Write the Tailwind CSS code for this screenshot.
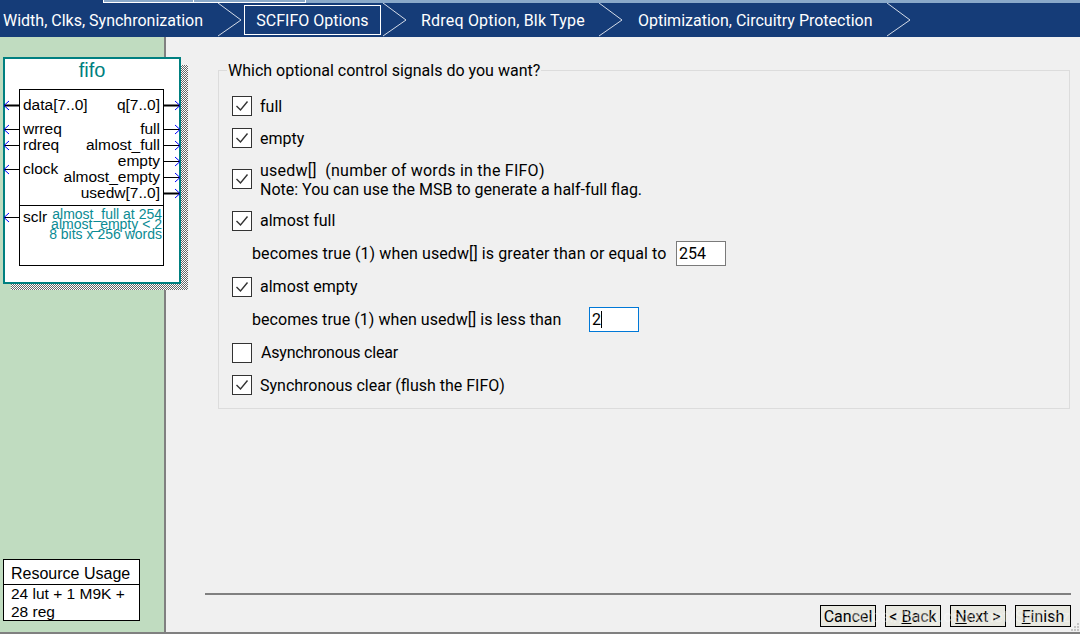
<!DOCTYPE html>
<html lang="en">
<head>
  <meta charset="UTF-8">
  <title>SCFIFO Options</title>
  <script src="https://cdn.jsdelivr.net/npm/@tailwindcss/browser@4"></script>
</head>
<body class="w-[1080px] h-[634px] overflow-hidden bg-[#f0f0f0] font-['Roboto',sans-serif] text-[16px] text-black flex flex-col">

  <!-- wizard steps -->
  <header class="h-[37px] shrink-0 bg-[#153c78] relative text-white">
    <div class="absolute left-[103px] right-0 top-0 h-[3px] bg-[#8aa9c9]"></div>
    <div class="absolute left-[103px] top-0 h-[3px] w-[203px] flex border-b border-x border-white">
      <div class="w-[90px] border-r border-white"></div>
    </div>
    <nav class="flex items-center h-full pt-[3px]">
      <span class="ml-[3px] w-[215px] pt-[1px] whitespace-nowrap">Width, Clks, Synchronization</span>
      <svg class="w-[24px] h-[34px]" viewBox="0 0 24 34" fill="none" stroke="#d5dce8"><path d="M0 0 L23 17 L0 33"/></svg>
      <span class="ml-[2px] w-[137px] h-[30px] pt-[1px] border border-white flex items-center justify-center whitespace-nowrap">SCFIFO Options</span>
      <svg class="ml-[2px] w-[24px] h-[34px]" viewBox="0 0 24 34" fill="none" stroke="#d5dce8"><path d="M0 0 L23 17 L0 33"/></svg>
      <span class="ml-[14px] w-[178px] pt-[1px] tracking-[0.2px] whitespace-nowrap">Rdreq Option, Blk Type</span>
      <svg class="w-[24px] h-[34px]" viewBox="0 0 24 34" fill="none" stroke="#d5dce8"><path d="M0 0 L23 17 L0 33"/></svg>
      <span class="ml-[15px] w-[249px] pt-[1px] whitespace-nowrap">Optimization, Circuitry Protection</span>
      <svg class="w-[24px] h-[34px]" viewBox="0 0 24 34" fill="none" stroke="#d5dce8"><path d="M0 0 L23 17 L0 33"/></svg>
    </nav>
  </header>

  <div class="flex flex-1 min-h-0 border-b-2 border-[#808080]">
    <!-- symbol panel -->
    <aside class="w-[166px] shrink-0 bg-[#c0dcc0] border-r-2 border-[#808080] relative font-['Liberation_Sans',sans-serif] text-[15.5px] leading-[16px]">
      <div class="absolute left-[11px] top-[28px] w-[177px] h-[225px] bg-[repeating-conic-gradient(#666666_0_25%,#ffffff_0_50%)] bg-size-[2px_2px]"></div>
      <div class="absolute left-[3px] top-[20px] w-[178px] h-[227px] bg-white border-2 border-[#008080]">
        <div class="text-center text-[#008080] text-[20px] leading-[22px]">fifo</div>
      </div>
      <div class="absolute left-[19px] top-[52px] w-[145px] h-[177px] border border-black"></div>
      <div class="absolute left-[19px] top-[168px] w-[145px] h-px bg-black"></div>

      <svg class="absolute left-0 top-0 w-[190px] h-[260px]" viewBox="0 0 190 260" fill="none">
        <g stroke="#000">
          <path d="M4 68.5H19" stroke-width="2"/>
          <path d="M4 92.5H19M4 108.5H19M4 132.5H19M4 180.5H19"/>
          <path d="M164 68.5H180" stroke-width="2"/>
          <path d="M164 92.5H180M164 108.5H180M164 124.5H180M164 140.5H180"/>
          <path d="M164 156.5H180" stroke-width="2"/>
        </g>
        <g stroke="#0000ff">
          <path d="M9 64L4 68.5L9 73M9 88L4 92.5L9 97M9 104L4 108.5L9 113M9 128L4 132.5L9 137M9 176L4 180.5L9 185"/>
          <path d="M175 64L180 68.5L175 73M175 88L180 92.5L175 97M175 104L180 108.5L175 113M175 120L180 124.5L175 129M175 136L180 140.5L175 145M175 152L180 156.5L175 161"/>
        </g>
      </svg>

      <span class="absolute left-[23px] top-[60px]">data[7..0]</span>
      <span class="absolute left-[23px] top-[84px]">wrreq</span>
      <span class="absolute left-[23px] top-[100px]">rdreq</span>
      <span class="absolute left-[23px] top-[124px]">clock</span>
      <span class="absolute left-[23px] top-[172px]">sclr</span>

      <span class="absolute right-[4px] top-[60px]">q[7..0]</span>
      <span class="absolute right-[4px] top-[84px]">full</span>
      <span class="absolute right-[4px] top-[100px]">almost_full</span>
      <span class="absolute right-[4px] top-[116px]">empty</span>
      <span class="absolute right-[4px] top-[132px]">almost_empty</span>
      <span class="absolute right-[4px] top-[148px]">usedw[7..0]</span>

      <span class="absolute right-[2px] top-[172px] text-[14px] leading-[10px] text-[#0a8b94] text-right whitespace-nowrap">almost_full at 254<br>almost_empty &lt; 2<br>8 bits x 256 words</span>

      <div class="absolute left-[3px] top-[522px] w-[137px] h-[62px] bg-white border border-black">
        <div class="h-[25px] border-b border-black pl-[7px] pt-[6px] text-[16px]">Resource Usage</div>
        <div class="pl-[7px] leading-[18px]">24 lut + 1 M9K +<br>28 reg</div>
      </div>
    </aside>

    <!-- options -->
    <main class="flex-1 relative">
      <section class="absolute left-[52px] top-[33px] w-[852px] h-[339px] border border-[#dcdcdc]">
        <h2 class="absolute left-[8px] top-[-11px] px-[1px] bg-[#f0f0f0] text-[16px] leading-[22px] font-normal whitespace-nowrap">Which optional control signals do you want?</h2>
        <div class="pt-[19px] pl-[13px]">
          <label class="h-[32px] flex items-center gap-[8px]">
            <svg class="w-[20px] h-[20px] bg-white border border-[#333333]" viewBox="0 0 18 18" fill="none" stroke="#333333" stroke-width="1.4"><path d="M3.5 9L7.5 13L14.5 4.5"/></svg>
            <span class="pt-[1px]">full</span>
          </label>
          <label class="h-[32px] flex items-center gap-[8px]">
            <svg class="w-[20px] h-[20px] bg-white border border-[#333333]" viewBox="0 0 18 18" fill="none" stroke="#333333" stroke-width="1.4"><path d="M3.5 9L7.5 13L14.5 4.5"/></svg>
            <span class="pt-[1px]">empty</span>
          </label>
          <label class="h-[50px] flex items-center gap-[8px]">
            <svg class="w-[20px] h-[20px] bg-white border border-[#333333]" viewBox="0 0 18 18" fill="none" stroke="#333333" stroke-width="1.4"><path d="M3.5 9L7.5 13L14.5 4.5"/></svg>
            <span class="pt-[1px] leading-[19px]"><span class="tracking-[0.25px]">usedw[] &nbsp;(number of words in the FIFO)</span><br>Note: You can use the MSB to generate a half-full flag.</span>
          </label>
          <label class="h-[33px] flex items-center gap-[8px]">
            <svg class="w-[20px] h-[20px] bg-white border border-[#333333]" viewBox="0 0 18 18" fill="none" stroke="#333333" stroke-width="1.4"><path d="M3.5 9L7.5 13L14.5 4.5"/></svg>
            <span class="pt-[1px]">almost full</span>
          </label>
          <div class="h-[33px] flex items-center pl-[20px]">
            <span class="w-[424px] pt-[1px] tracking-[0.1px] whitespace-nowrap">becomes true (1) when usedw[] is greater than or equal to</span>
            <input class="w-[50px] h-[25px] bg-white border border-[#7a7a7a] px-[2px] outline-none" value="254">
          </div>
          <label class="h-[33px] flex items-center gap-[8px]">
            <svg class="w-[20px] h-[20px] bg-white border border-[#333333]" viewBox="0 0 18 18" fill="none" stroke="#333333" stroke-width="1.4"><path d="M3.5 9L7.5 13L14.5 4.5"/></svg>
            <span class="pt-[1px]">almost empty</span>
          </label>
          <div class="h-[33px] flex items-center pl-[20px]">
            <span class="w-[337px] pt-[1px] tracking-[0.05px] whitespace-nowrap">becomes true (1) when usedw[] is less than</span>
            <div class="w-[50px] h-[25px] bg-white border border-[#0078d7] px-[2px] flex items-center">2<span class="w-px h-[17px] bg-black"></span></div>
          </div>
          <label class="h-[33px] flex items-center gap-[9px]">
            <span class="w-[20px] h-[20px] bg-white border border-[#333333]"></span>
            <span class="pt-[1px] tracking-[-0.2px]">Asynchronous clear</span>
          </label>
          <label class="h-[32px] flex items-center gap-[8px]">
            <svg class="w-[20px] h-[20px] bg-white border border-[#333333]" viewBox="0 0 18 18" fill="none" stroke="#333333" stroke-width="1.4"><path d="M3.5 9L7.5 13L14.5 4.5"/></svg>
            <span class="pt-[1px]">Synchronous clear (flush the FIFO)</span>
          </label>
        </div>
      </section>

      <div class="absolute left-[39px] top-[556px] w-[866px] h-[2px] bg-[#808080]"></div>

      <div class="absolute left-[654px] top-[568px] flex gap-[9px] text-[16px] leading-[20px]">
        <button class="w-[56px] h-[22px] pt-[1px] bg-[#e8e8e0] border border-black text-center">Cancel</button>
        <button class="w-[56px] h-[22px] pt-[1px] bg-[#e8e8e0] border border-black text-center">&lt; <u>B</u>ack</button>
        <button class="w-[56px] h-[22px] pt-[1px] bg-[#e8e8e0] border border-black text-center"><u>N</u>ext &gt;</button>
        <button class="w-[56px] h-[22px] pt-[1px] bg-[#e8e8e0] border border-black text-center"><u>F</u>inish</button>
      </div>

      <!-- watermark over the buttons -->
      <span class="absolute right-[10px] top-[568px] text-[17px] leading-[22px] text-white/40 whitespace-nowrap pointer-events-none">https://blog.csdn.net/Son_hz</span>

      <!-- resize grip -->
      <svg class="absolute right-0 bottom-0 w-[10px] h-[10px]" viewBox="0 0 10 10" fill="#c4c4c4">
        <rect x="7" y="1" width="2" height="2"/>
        <rect x="4" y="4" width="2" height="2"/><rect x="7" y="4" width="2" height="2"/>
        <rect x="1" y="7" width="2" height="2"/><rect x="4" y="7" width="2" height="2"/><rect x="7" y="7" width="2" height="2"/>
      </svg>
    </main>
  </div>
</body>
</html>
